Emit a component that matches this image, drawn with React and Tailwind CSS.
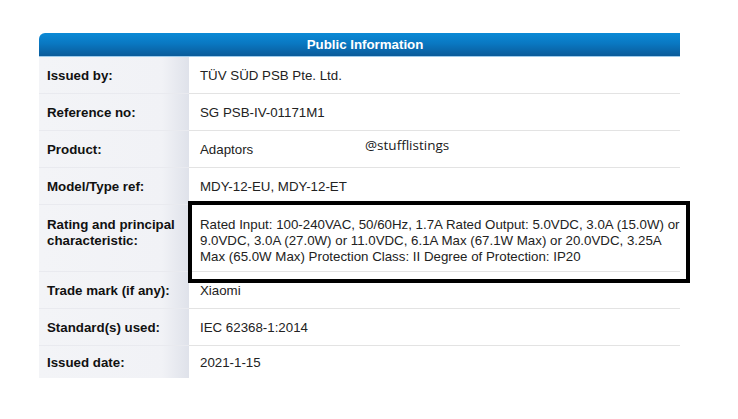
import React from 'react';

const rows = [
  { label: 'Issued by:', value: 'TÜV SÜD PSB Pte. Ltd.' },
  { label: 'Reference no:', value: 'SG PSB-IV-01171M1' },
  { label: 'Product:', value: 'Adaptors' },
  { label: 'Model/Type ref:', value: 'MDY-12-EU, MDY-12-ET' },
  {
    label: ['Rating and principal', 'characteristic:'],
    value: [
      'Rated Input: 100-240VAC, 50/60Hz, 1.7A Rated Output: 5.0VDC, 3.0A (15.0W) or',
      '9.0VDC, 3.0A (27.0W) or 11.0VDC, 6.1A Max (67.1W Max) or 20.0VDC, 3.25A',
      'Max (65.0W Max) Protection Class: II Degree of Protection: IP20',
    ],
    tall: true,
  },
  { label: 'Trade mark (if any):', value: 'Xiaomi' },
  { label: 'Standard(s) used:', value: 'IEC 62368-1:2014' },
  { label: 'Issued date:', value: '2021-1-15', last: true },
];

const labelBg = 'bg-[linear-gradient(to_right,#f3f4f7_0%,#f1f2f6_82%,#dfe2ea_100%)]';

const Row = ({ row }) => {
  if (row.tall) {
    return (
      <div className="flex h-[67px]">
        <div className={`w-[150px] shrink-0 pl-[8px] pt-[12px] leading-[16px] font-bold text-[#111] border-b border-[#e9eaef] ${labelBg}`}>
          {row.label.map((l) => (
            <div key={l}>{l}</div>
          ))}
        </div>
        <div className="flex-1 pl-[11px] pt-[12px] leading-[16px] text-[#222] border-b border-[#e3e3e3]">
          {row.value.map((l) => (
            <div key={l} className="whitespace-nowrap">{l}</div>
          ))}
        </div>
      </div>
    );
  }
  return (
    <div className={`flex ${row.last ? 'h-[32px]' : 'h-[37px]'}`}>
      <div
        className={`w-[150px] shrink-0 pl-[8px] flex items-center font-bold text-[#111] ${labelBg} ${
          row.last ? 'pt-[2px]' : 'pt-[2px] border-b border-[#e9eaef]'
        }`}
      >
        {row.label}
      </div>
      <div
        className={`flex-1 pl-[11px] flex items-center text-[#222] ${
          row.last ? 'pt-[2px]' : 'pt-[2px] border-b border-[#e3e3e3]'
        }`}
      >
        {row.value}
      </div>
    </div>
  );
};

export default function App() {
  return (
    <div className="relative w-[738px] h-[419px] bg-white overflow-hidden font-['Liberation_Sans',Arial,sans-serif] text-[13.3px]">
      <div className="pt-[33px] pl-[39px]">
        <div className="w-[641px]">
          <div className="h-[24px] rounded-tl-[6px] bg-[linear-gradient(to_bottom,#0b8ad6_0%,#0a78c2_45%,#0a5b9a_100%)] border-b border-[#9ccbec] flex items-center justify-center pl-[11px] text-white font-bold">
            Public Information
          </div>
          {rows.map((r, i) => (
            <Row key={i} row={r} />
          ))}
        </div>
      </div>

      <div className="absolute left-[365px] top-[135px] font-['Open_Sans',sans-serif] text-[13.5px] text-[#1a1a1a]">
        @stufflistings
      </div>

      <div className="absolute left-[188px] top-[201px] w-[502px] h-[82px] border-[4px] border-black" />
    </div>
  );
}
